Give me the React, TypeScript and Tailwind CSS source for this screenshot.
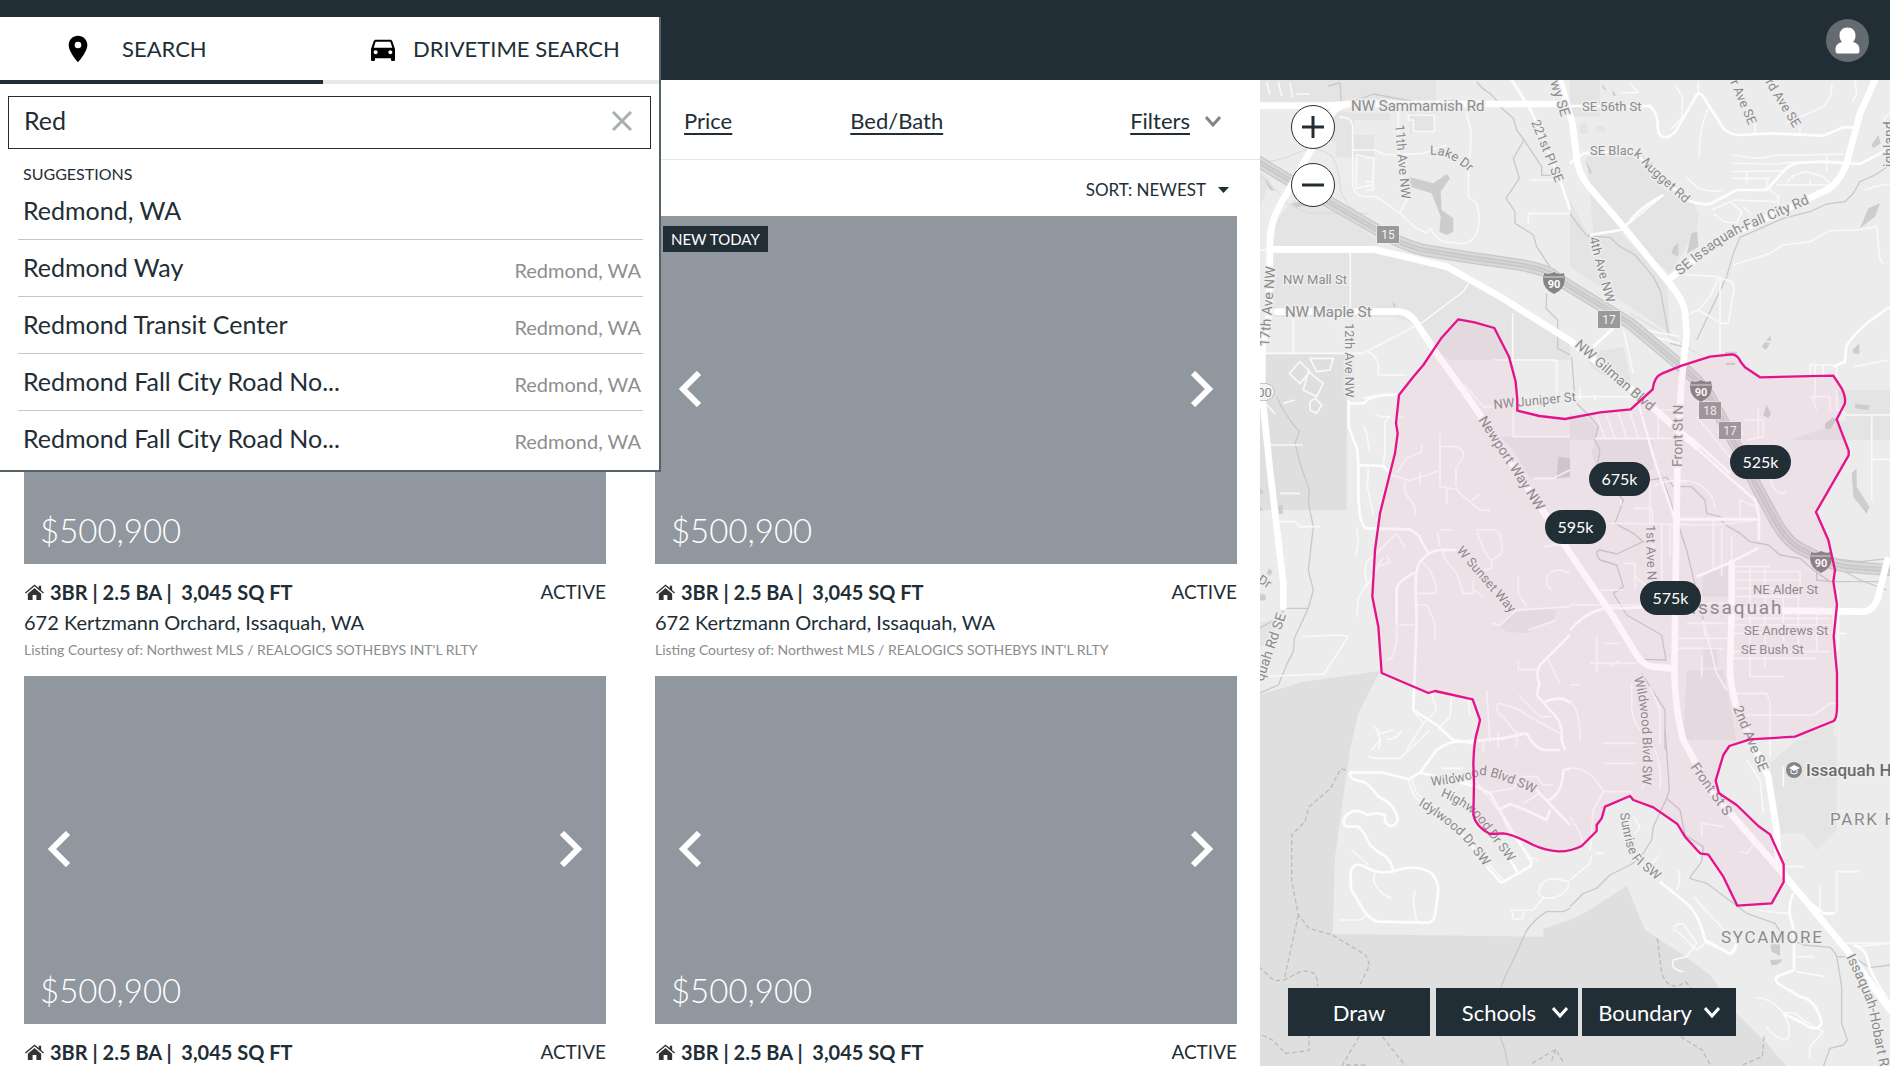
import { MdDirectionsCar, MdPlace } from "react-icons/md";

const suggestions = [
  { name: "Redmond, WA", city: "" },
  { name: "Redmond Way", city: "Redmond, WA" },
  { name: "Redmond Transit Center", city: "Redmond, WA" },
  { name: "Redmond Fall City Road No...", city: "Redmond, WA" },
  { name: "Redmond Fall City Road No...", city: "Redmond, WA" },
];

const listings = [
  { id: 1, isNew: true },
  { id: 2, isNew: true },
  { id: 3, isNew: false },
  { id: 4, isNew: false },
];

const pins = [
  { price: "675k", place: "left-[329px] top-[382px]" },
  { price: "525k", place: "left-[470px] top-[365px]" },
  { price: "595k", place: "left-[285px] top-[430px]" },
  { price: "575k", place: "left-[380px] top-[501px]" },
];

// Map geometry is drawn at three units per pixel, in six tiles
const tiles = [
  {
    at: "translate(-27 -30)",
    areas: [
      "M0 30H558V92L470 98L400 84L290 98H0Z",
      "M60 550H370L600 600L960 810V870H600L560 850L480 755L430 740H60Z",
      "M80 450L130 390L230 410L400 520L360 530H70Z",
      "M258 195H372V262H258ZM243 125H312V215H243Z",
      "M478 128H555V190H480ZM310 130H420V150H310Z",
      "M20 440L60 330L27 300Z",
    ],
    parks: ["M38 850H310L290 990V1320H27V880Z"],
    water: [
      "M475 320L550 340L590 312L600 325L572 365L575 420L610 445V485L590 495L568 485L572 440L545 370L480 350Z",
      "M42 325L75 362L60 360ZM125 402L160 392L210 400L140 412ZM428 690L440 712H430Z",
    ],
    trails: [
      "M235 48L270 38L274 100",
      "M680 36Q700 60 720 70Q750 100 750 110L790 145L800 180L822 210L790 265L808 325L768 385L795 425V460L850 495L860 530L905 598",
      "M822 210L875 290V316H940",
      "M890 670L888 715L923 750V835L960 855",
      "M270 110L370 72L520 100L620 90",
    ],
    minor: [
      "M268 142Q305 138 308 170V340Q312 380 350 380Q380 375 400 395L450 430L500 475L530 488L542 475Q560 520 610 518Q660 530 680 490Q695 450 680 400L655 380V290Q665 230 662 180L650 130",
      "M308 240H375Q400 255 420 255L520 250L590 225",
      "M445 110V250L450 290L470 390L448 430",
      "M130 740V850M301 545V735M27 540H80M27 850H340L520 755M520 755L640 665L655 640",
      "M320 255L372 265L368 345L318 355ZM345 335H370V360H348",
      "M475 135H553V185H490V150H475Z",
      "M355 845Q375 855 385 880V915H470M788 730V870M730 870H920V990M340 985Q380 975 440 972",
      "M50 35L60 75M85 35L95 78M120 38L128 82M140 72H180",
      "M150 875L180 905L150 940L118 910ZM175 905L220 940L200 980L160 960ZM180 865H250L240 900L200 905Z",
      "M838 330H950M835 460V430H960",
    ],
    medium: ["M785 30L845 125L885 220L930 330L960 420"],
  },
  {
    at: "translate(933 -240)",
    areas: [
      "M0 240H90V350H0ZM50 470L220 465L285 570L360 590L385 640L380 690L300 820L160 700L70 700Z",
      "M0 600L50 700L150 700L290 840L300 1000L0 800Z",
      "M50 1060L160 1040L190 1180L60 1100Z",
      "M28 372L50 370L55 400L30 402ZM80 378H105V395H80Z",
    ],
    parks: [],
    water: [
      "M95 250L110 270L100 268ZM128 270L140 288L128 286ZM905 435L925 405L932 430L910 445Z",
      "M870 685L895 625L930 610L915 650ZM350 762L365 700L382 695L385 740ZM310 740L325 730V770L305 760Z",
      "M575 1040L585 1025L600 1030L588 1050ZM592 1015L603 1008V1022H590ZM848 1050L868 1030V1062L850 1060Z",
      "M465 1055H500V1065H465ZM468 1088H495V1095H468Z",
      "M45 478L65 515L60 525Z",
    ],
    trails: [
      "M0 640Q40 700 55 708L120 712L150 740L195 765L250 830L272 875L280 920L297 1010",
      "M960 495L915 525L870 545L850 580L825 605L770 612L720 635L640 655L510 712L490 760L470 830L380 1020",
      "M5 1070L15 1200M300 1030L360 1045",
    ],
    minor: [
      "M180 250L205 278H150M315 255L338 290L335 355L300 390M385 245V278M415 325Q385 390 388 470",
      "M555 370V400M690 380V400M650 370L760 320Q790 290 785 250M855 240L860 280L848 305",
      "M485 465L560 475L630 465H700L820 462M485 490L620 492L680 485M485 515L640 512M485 535H600M485 600L620 605M770 465V515M530 515V555M590 535V570M620 555H775",
      "M650 550Q665 520 710 515L760 530L780 550M720 540V555",
      "M350 532L385 565Q430 580 460 570M425 630L480 605L515 635L500 670L460 665L430 640M520 620L545 645M600 570L625 590V620",
      "M490 795L600 760L640 735L720 725L780 692L860 690L920 680L930 780L940 790",
      "M330 822L440 830L485 845Q495 860 490 880L475 970H455L385 930M450 830V1060",
      "M445 835L420 890L385 930L350 945M160 990L190 1120M200 985L330 1010M210 1000L330 1030",
      "M720 1095H800V1130H720ZM735 1095V1200M760 1095V1130M850 1100L955 1080",
      "M885 570L920 558L960 552M960 340Q930 360 945 380L960 370",
      "M0 1190H190M30 1165V1200M75 1185V1200",
      "M150 690L190 660L280 585",
    ],
    medium: [
      "M0 318H240Q262 340 263 370Q262 410 285 412Q310 410 325 380L380 285Q388 275 400 290L460 385Q480 405 510 405L600 400L760 407L820 382H860",
      "M0 490L40 460L120 455H190L350 600Q390 615 420 612L500 570L590 570L640 515Q660 490 690 488L760 485L870 492L960 445",
      "M60 705L150 690L180 665Q200 630 280 585",
      "M960 920L890 970Q825 1030 828 1050L825 1085L790 1100",
      "M70 1040L130 985",
    ],
  },
  {
    at: "translate(-27 930)",
    areas: ["M750 140H960V265H840L790 180Z", "M27 700L90 680L60 760L27 770ZM750 710L790 670L850 655L920 660L910 690L830 730L770 725Z"],
    parks: ["M27 915L160 875L390 843L325 970L300 1080L255 1400L248 1632L880 1640V1616L960 1590V2100H27Z"],
    water: [
      "M27 290L42 310H27ZM27 345L40 362H27ZM85 345H98V372H86ZM58 535L68 545L60 558L50 550ZM27 612L47 614V630L30 632Z",
      "M925 200L960 205V260L920 265Z",
    ],
    trails: [
      "M80 20Q100 70 148 125L135 160L150 220L178 300L175 340L190 410L175 540L190 600L175 655L133 745L130 785L112 820L85 885L27 910",
      "M27 715L85 685L105 655H175",
    ],
    minor: [
      "M50 45L75 70M100 40L135 30M180 35L195 25L215 45L200 70L180 60Z",
      "M45 165H158M90 310H150M80 395H135L150 410H210M325 225L330 395",
      "M375 70L390 80H420L405 95V185L400 230M340 110L350 130L358 185M355 235L352 290L370 375M440 80H460",
      "M515 165V185L470 205L440 250M425 255L480 272L530 255L565 242M465 275V310L495 350V378M510 245V285M570 130V290L620 298L640 320L690 360L720 362M570 170H620Q645 180 640 200L618 235V290M590 295V345M665 330L690 312",
      "M320 415L325 450L318 498M350 515L345 540L350 580L325 625L320 680M440 430L380 490L350 515M440 430L465 475M385 530L420 515L410 495",
      "M570 420H610M562 425L570 470M680 420H740Q760 440 755 490L725 510V535L690 545M680 425L700 475L720 510",
      "M515 515Q560 555 558 610H500M445 705H495M500 645H530L555 700V750M440 590V760L425 805L405 810M350 590L400 500",
      "M155 740L270 735L295 740L220 855M27 860L220 852",
      "M580 475V500L620 550L640 610H670V570M670 600L700 620M805 560V610L830 650M890 575Q890 540 930 540L960 550M905 600Q890 590 890 575",
      "M725 700L750 705L800 660L960 650M835 720L920 690",
      "M640 -20L700 50H740M790 60V140H960M850 265H910L960 240M880 470L960 460",
      "M395 1045L365 1080M370 1005Q400 1040 385 1080M490 910V960L520 1000L470 1080M545 912L560 960L520 1000M605 915L600 980L570 1010M655 930L660 975",
      "M805 815V838H860M895 810L930 880M710 900L720 1060M745 940Q730 960 760 980L800 1030L820 1030M745 940Q800 950 830 975L930 1030M805 915L870 980H905",
    ],
    medium: [
      "M296 30V110L322 180L325 225L400 228L425 255M325 225V330Q330 410 350 415L480 418L505 435L535 490",
      "M620 480H570Q540 480 510 515Q495 540 497 600L500 700L490 960L560 1005L610 1050",
      "M495 548Q440 575 440 600V700",
      "M300 40H340Q370 10 440 15",
      "M960 735L870 825Q855 850 868 880L860 915Q890 950 910 970Q940 1000 935 1050L945 1080M885 935Q940 915 960 940",
    ],
  },
  {
    at: "translate(933 930)",
    areas: [
      "M75 150H250V240L80 235L65 190ZM0 70L50 80L85 120L75 150H0ZM400 550L480 520V620H395ZM350 840H460L500 1050H340Z",
      "M400 770H440L445 830H400ZM660 150H960V0H800L830 90Z",
      "M680 1040L790 1000V1060Z",
    ],
    parks: [],
    water: [
      "M845 250L860 235V290L898 350L890 372L850 320ZM855 42L898 46L895 60L855 55ZM765 100L790 82L800 90L780 118L765 115ZM580 75L590 45L603 70L595 85Z",
    ],
    trails: [
      "M20 40L60 80L85 110L75 150L90 180L80 240L160 330L135 400L190 430L220 455L140 492L90 480Q70 485 90 510L140 525L160 590L130 610L170 675L275 735L288 810L220 808",
      "M200 30L250 200L290 300L350 480L400 690",
      "M240 270L290 262L310 290L365 290L405 330L410 370L450 380L460 400L510 430L540 455L595 465L630 495L690 505L730 540L780 575H930",
      "M740 540V570L780 575",
      "M780 505L870 515L960 505M780 520L870 570L950 600",
      "M215 850L285 960V1080",
    ],
    minor: [
      "M80 80L105 145M110 75L135 145M145 70L170 145M180 65L205 145M75 145H320M265 65V145M320 60H220",
      "M150 330L155 345M190 355H245L250 400M240 275V400M120 400L440 405L560 390M330 385H560M565 340V450M560 475L480 520M400 690L405 740",
      "M250 290Q300 260 350 280M320 270Q420 270 435 350M510 380V330L560 350M720 20H780V60M740 60L725 20M600 250Q605 310 640 310L650 300",
      "M275 400V580M300 405V500M160 520H195V600M250 405V540M190 555L245 600M430 390V540M455 415V560M485 440V560",
      "M490 530H600M485 545H690V595M490 570H690M490 595H690M490 620H690M490 685H780M490 705H780M490 730H780M490 785H780M490 805H740M540 530V860M585 530V830M640 620V780M685 600V780M740 660V780M790 660V780",
      "M320 745H480M320 775H460M350 700H470M0 645H320M320 640H490M90 600H160M60 820H200M80 740V850M100 760H150M120 830L150 810M0 885H30",
      "M400 690L440 850L470 900M395 800V860M480 910H590L600 940V1050M520 975H730M730 975L780 940H800M540 860H640",
      "M380 80L520 250M480 130H520M565 50V140M520 90H580V140L530 150",
      "M905 80V208H960M820 75H960M905 205V330M805 600V780M805 730H830",
      "M185 880V960Q190 1000 220 1030M240 890L270 960V1060M0 930Q30 960 30 1050",
      "M800 0V60L830 70",
    ],
    medium: [
      "M205 40L250 200L320 405M380 175L480 265L555 330L567 380V450M360 140L480 250M0 720Q70 640 160 655L240 650",
      "M320 388H565M380 560L480 518L565 475M240 650H320",
    ],
  },
  {
    at: "translate(-27 1950)",
    areas: [],
    parks: [],
    water: [],
    trails: ["M960 535L940 545H890Q850 570 828 605L790 690L765 740L750 780V920L765 960L775 1010"],
    minor: [
      "M390 10L430 0M355 80L380 85H450L540 0M385 20V0M455 0Q440 30 410 28",
      "M560 160L680 155Q705 190 745 240M575 115H640M745 235L780 310L800 330M700 65V30M745 55V10M800 50V10",
      "M305 362L335 385L355 405M375 425Q365 455 380 470Q400 500 425 503M495 480L490 515L500 575M268 570H330L350 555",
      "M865 490Q870 450 910 445L955 455Q960 490 910 503Q880 510 865 490ZM880 503L850 540L820 540M785 540L820 540V565L790 568Z",
      "M475 150L490 195L560 260L640 320L750 458M485 148L500 190L570 240L760 450",
      "M700 190L790 175L810 140H860L880 165H910M820 220L870 190",
      "M840 380L865 390",
    ],
    medium: [
      "M300 128H400L475 148L510 128L560 60Q600 30 640 35L760 25L830 10Q850 50 880 60H930",
      "M300 128Q295 150 340 155Q360 165 385 200Q440 225 443 270Q435 290 420 288Q400 280 405 255Q380 245 350 255Q320 230 290 255Q270 280 290 290H325Q345 310 360 345Q380 365 400 375Q420 385 430 422",
      "M303 420Q315 395 345 410Q385 435 430 424Q500 400 545 430Q570 460 564 490L555 555Q550 580 530 578L385 575Q360 570 340 540L305 480Q300 460 303 420Z",
      "M510 128L680 170L720 190L790 310L845 395Q845 410 830 415L755 458L710 410M775 380L805 430",
      "M745 240L780 222Q830 240 890 270L900 240M850 170L960 285M890 215Q940 190 940 120L960 115",
      "M575 0L610 30L680 42",
    ],
  },
  {
    at: "translate(933 1950)",
    areas: ["M680 30L800 20V300L740 360L700 310H620L600 100Z"],
    parks: ["M-60 620L0 570L50 545L170 468L225 600L330 668L420 735L500 850L590 940L650 1010H-60Z"],
    water: ["M600 640H630V678L605 665ZM600 690L635 688V695L620 705H604ZM950 830L960 825V835Z"],
    trails: [
      "M0 530L40 490L80 475L120 435L180 405L210 385L245 330L250 290L290 205L298 180L290 60L285 0",
      "M290 205L330 240L345 315L400 350L395 395L365 435L360 445L410 460L530 550L615 580L640 620L700 645L780 652Q800 670 802 690L815 770V880L832 930L820 945L780 955L760 1010",
      "M800 680L850 682L900 713L960 705",
    ],
    minor: [
      "M0 115Q60 110 100 185H190M100 185L70 240L60 365M75 370H100M65 375L60 400L0 450M105 100H200M95 40H200",
      "M240 30Q280 100 270 180M215 180L230 150M395 320V280L460 290M510 365L530 370L550 345M530 90L570 150L580 250",
      "M190 260L210 290L195 310M245 400L270 375M320 480Q335 450 325 420M385 385V350",
      "M630 410H700M800 550V425H865M670 490Q655 520 660 560L672 600V720M560 540L640 550H660M672 680H730M680 725L765 740",
      "M370 500L500 640L480 670L410 640M410 635L380 660Q320 600 312 600Q310 580 340 582L380 640L350 680L310 690Q300 720 340 725",
      "M560 805Q600 800 640 850Q670 900 650 930Q620 930 590 890M640 850Q670 840 700 870L760 905L720 950L718 985",
      "M820 640H960M750 465V540M960 640L860 650M0 260Q30 300 40 340",
      "M600 0V80M640 110V170",
    ],
    medium: [
      "M270 455L350 520Q385 550 405 630L480 672Q495 670 500 640",
      "M672 720L620 740Q610 755 640 770L690 800Q740 810 755 880Q740 910 700 880L640 850",
      "M850 645Q890 655 895 700Q900 730 960 820M710 510L760 550H795",
      "M670 490Q655 520 660 560L672 600V720",
    ],
  },
];

const highway =
  "M-30 228L98 305L203 362L363 455Q430 495 493 510L613 530L753 550Q830 560 873 580L933 620L1113 730L1268 860Q1340 920 1363 970L1433 1100L1493 1220L1553 1330Q1590 1390 1623 1405L1693 1440Q1740 1460 1783 1462L1893 1470";

const arterials = [
  "M-27 77H200L270 72H900",
  "M265 72Q235 78 215 105L150 220L83 340Q33 420 33 480L31 700L10 800V950L33 1170L73 1510V1580",
  "M43 508H343L563 560L723 650L933 782L1133 940L1313 1100",
  "M53 695H423Q455 700 473 730L533 820L633 960L673 1020L863 1310L933 1420L1063 1610L1130 1720Q1150 1755 1180 1760L1243 1765",
  "M903 0L920 60L940 130L955 250Q965 290 990 320L1093 440L1223 600Q1275 660 1278 700L1283 760L1268 900L1256 1100L1251 1430L1246 1780Q1250 1900 1273 1980L1353 2130L1563 2370L1763 2610L1893 2790",
  "M1848 0L1803 100L1763 250Q1740 310 1703 330L1533 410L1400 470L1233 595",
  "M1418 1450V1590L1413 1780Q1420 1850 1440 1900L1528 2090L1553 2250L1558 2350",
  "M1413 1590L1813 1595Q1850 1590 1860 1540L1885 1440",
];

const boundary =
  "M598 718L647 727L706 744L750 830L770 905L775 960V992L841 1008L918 1017L1023 997L1115 988L1181 928Q1185 890 1210 880L1268 857L1353 830L1418 823Q1435 823 1445 845L1458 862L1503 892L1723 887L1748 925Q1762 955 1757 972L1733 1018L1769 1112V1126L1671 1296L1708 1380L1728 1470L1723 1505L1734 1573L1724 1670L1734 1780V1880Q1734 1915 1724 1923L1608 1970L1473 1978L1411 1998L1393 2025L1370 2102L1380 2140L1433 2175L1498 2238L1533 2263L1574 2353V2406L1538 2470L1435 2477L1393 2390L1348 2324L1323 2320L1278 2270L1255 2232L1183 2182L1123 2160L1113 2148L1038 2180L1028 2215L1013 2235V2253L968 2298Q935 2315 898 2314Q860 2312 823 2295Q760 2262 733 2260L693 2262Q650 2240 643 2205L645 2110L643 2050Q645 1980 656 1950L663 1920L641 1858L528 1833L508 1839L368 1779L358 1640L340 1550L348 1410L363 1300L408 1120L416 1060L411 1030L420 945L463 890L493 855L548 773Z";

// Street names that run along a road
const roadLabels = [
  { name: "17th Ave NW", path: "M10 267L17 180", size: 14 },
  { name: "12th Ave NW", path: "M86 243L86 340", size: 13 },
  { name: "11th Ave NW", path: "M136 45L144 135", size: 13 },
  { name: "Lake Dr", path: "M171 75Q190 73 212 94", size: 13 },
  { name: "221st Pl SE", path: "M272 42L300 112", size: 13 },
  { name: "wy SE", path: "M291 2L306 50", size: 14 },
  { name: "SE Black Nugget Rd", path: "M331 75L373 75Q380 78 386 88L440 136", size: 13 },
  { name: "SE Issaquah-Fall City Rd", path: "M421 196Q465 158 488 150L570 115", size: 14 },
  { name: "4th Ave NW", path: "M330 158L352 240", size: 13 },
  { name: "NW Gilman Blvd", path: "M315 266L412 350", size: 14 },
  { name: "r Ave SE", path: "M471 2L496 60", size: 13 },
  { name: "rd Ave SE", path: "M506 2L545 65", size: 13 },
  { name: "Newport Way NW", path: "M219 340L292 452", size: 14 },
  { name: "NW Juniper St", path: "M235 329L330 320", size: 13 },
  { name: "W Sunset Way", path: "M197 471L262 546", size: 13 },
  { name: "Front St N", path: "M423 387L424 310", size: 14 },
  { name: "1st Ave N", path: "M387 445L389 520", size: 13 },
  { name: "Wildwood Blvd SW", path: "M375 598Q388 645 382 720", size: 13 },
  { name: "2nd Ave SE", path: "M474 628L506 705", size: 14 },
  { name: "Wildwood Blvd SW", path: "M172 706Q205 703 222 695Q240 696 290 721", size: 13 },
  { name: "Highwood Dr SW", path: "M181 716Q210 728 220 742L260 796", size: 13 },
  { name: "Idylwood Dr SW", path: "M159 725Q195 748 207 763L240 806", size: 13 },
  { name: "Sunrise Pl SW", path: "M361 733Q366 770 375 782L412 812", size: 13 },
  { name: "Front St S", path: "M431 687L478 753", size: 14 },
  { name: "Issaquah-Hobart Rd", path: "M587 877Q604 910 610 930L625 1010", size: 14 },
  { name: "quah Rd SE", path: "M4 602L31 524", size: 14 },
  { name: "Dr", path: "M-2 502L18 514", size: 13 },
  { name: "ighland", path: "M635 87L635 20", size: 14 },
];

function Shield({ x, y }: { x: number; y: number }) {
  return (
    <g transform={`translate(${x} ${y})`}>
      <path
        d="M-10 -9Q-5 -7 0 -10Q5 -7 10 -9L11 -3Q11 7 0 12Q-11 7 -11 -3Z"
        fill="#858585"
        stroke="#ededed"
      />
      <path d="M-10 -5H10" stroke="#dcdcdc" />
      <text y="6" textAnchor="middle" fontSize="11" fontWeight="700" fill="#fff" stroke="none">
        90
      </text>
    </g>
  );
}

function Exit({ x, y, label }: { x: number; y: number; label: string }) {
  return (
    <g transform={`translate(${x} ${y})`}>
      <rect x="-11" y="-8" width="22" height="17" fill="#9a9a9a" stroke="#f4f4f4" />
      <text y="5" textAnchor="middle" fontSize="12" fill="#f3f3f3" stroke="none">
        {label}
      </text>
    </g>
  );
}

function MapCanvas() {
  return (
    <svg
      className="absolute inset-0 h-full w-full"
      viewBox="1 0 630 986"
      preserveAspectRatio="xMinYMin slice"
      role="img"
      aria-label="Map of Issaquah"
    >
      <rect width="631" height="986" fill="#ececec" />
      <svg width="631" height="986" viewBox="0 0 1893 2958" fill="none" strokeLinejoin="round">
        {tiles.map((tile) => (
          <g key={tile.at} transform={tile.at}>
            {tile.areas.map((d) => <path key={d} d={d} fill="#e4e4e4" />)}
          </g>
        ))}
        {tiles.map((tile) => (
          <g key={tile.at} transform={tile.at}>
            {tile.parks.map((d) => <path key={d} d={d} fill="#dfdfdf" />)}
            {tile.water.map((d) => <path key={d} d={d} fill="#cdcdcd" />)}
            {tile.trails.map((d) => <path key={d} d={d} stroke="#c9c9c9" strokeWidth="4" />)}
          </g>
        ))}
        <g stroke="#bcbcbc" strokeWidth="4" strokeDasharray="14 8">
          <path d="M260 2070L245 2066L215 2125L150 2180L138 2225L98 2265V2400L118 2505L150 2545L220 2565L320 2625L332 2655L300 2720M118 2505L75 2700L125 2675Q180 2665 175 2720M0 2660L45 2702L75 2700" />
          <path d="M10 2865L40 2880L80 2920L150 2912V2860M300 2870L250 2955H320M370 2870L440 2958M820 2950L890 2908L915 2950M890 2908L875 2950" />
          <path d="M1195 2575L1208 2680Q1230 2740 1280 2705L1300 2730M1265 2870L1330 2910L1355 2958M1515 2870L1510 2930L1450 2955" />
        </g>
        <g stroke="#dadada" strokeWidth="3">
          <path d="M-30 245Q60 250 110 220Q180 190 220 230Q240 260 245 330Q260 400 420 470" />
          <path d="M-30 270Q40 300 80 370L150 400L330 400M1113 700L1250 780L1330 830" />
        </g>
        {tiles.map((tile) => (
          <g key={tile.at} transform={tile.at} stroke="#f9f9f9">
            {tile.minor.map((d) => <path key={d} d={d} strokeWidth="5" />)}
          </g>
        ))}
        {tiles.map((tile) => (
          <g key={tile.at} transform={tile.at} stroke="#fdfdfd">
            {tile.medium.map((d) => <path key={d} d={d} strokeWidth="8" />)}
          </g>
        ))}
        <path d={highway} stroke="#c4c4c4" strokeWidth="36" />
        <path d={highway} stroke="#d8d8d8" strokeWidth="30" />
        <path d={highway} stroke="#c6c6c6" strokeWidth="14" />
        <path d={highway} stroke="#d2d2d2" strokeWidth="6" />
        {arterials.map((d) => <path key={d} d={d} stroke="#fff" strokeWidth="20" strokeLinecap="round" />)}
      </svg>

      <g
        className="font-[Roboto,sans-serif]"
        fill="#8b8b8b"
        stroke="#eeeeee"
        strokeWidth="3"
        strokeLinejoin="round"
        paintOrder="stroke"
        fontSize="13"
      >
        <text x="92" y="31" fontSize="15">NW Sammamish Rd</text>
        <text x="24" y="204">NW Mall St</text>
        <text x="26" y="237" fontSize="15">NW Maple St</text>
        <text x="323" y="31">SE 56th St</text>
        <text x="494" y="514">NE Alder St</text>
        <text x="485" y="555">SE Andrews St</text>
        <text x="482" y="574">SE Bush St</text>
        <text x="432" y="534" fontSize="19" className="tracking-widest">Issaquah</text>
        <text x="547" y="696" fontSize="17" fontWeight="500" fill="#6b6b6b">Issaquah High</text>
        <text x="571" y="745" fontSize="17" className="tracking-widest">PARK HILL</text>
        <text x="462" y="863" fontSize="17" className="tracking-widest">SYCAMORE</text>
        {roadLabels.map((road, i) => (
          <g key={road.path}>
            <path id={`road-${i}`} d={road.path} fill="none" stroke="none" />
            <text fontSize={road.size}>
              <textPath href={`#road-${i}`}>{road.name}</textPath>
            </text>
          </g>
        ))}
        <g strokeWidth="1">
          <Exit x={129} y={154} label="15" />
          <Exit x={350} y={239} label="17" />
          <Exit x={451} y={330} label="18" />
          <Exit x={471} y={350} label="17" />
          <Shield x={295} y={202} />
          <Shield x={442} y={310} />
          <Shield x={562} y={481} />
          <rect x="-14" y="304" width="29" height="16" rx="8" fill="#f3f3f3" stroke="#8b8b8b" />
          <text x="-9" y="317" fontSize="13" stroke="none">900</text>
          <circle cx="535" cy="690" r="8" fill="#858585" />
          <path d="M530 688L535 685L541 688L535 691Z" fill="#fff" stroke="none" />
          <path d="M532 690V693Q535 695 538 693V690" fill="none" stroke="#fff" />
        </g>
      </g>

      <svg width="631" height="986" viewBox="0 0 1893 2958">
        <path
          d={boundary}
          fill="#f25aa8"
          fillOpacity="0.07"
          stroke="#e5128a"
          strokeWidth="7"
          strokeLinejoin="round"
        />
      </svg>
    </svg>
  );
}

function ChevronDown({ className }: { className: string }) {
  return (
    <svg className={className} viewBox="0 0 16 16" fill="none" stroke="currentColor" strokeWidth="3" aria-hidden="true">
      <path d="M1 4L8 12L15 4" />
    </svg>
  );
}

function HouseIcon() {
  return (
    <svg className="h-[17px] w-[19px]" viewBox="0 0 20 17" fill="#333" aria-hidden="true">
      <path d="M10 0L0 8.500L1 9.600L10 2L19 9.600L20 8.500L17 6V1.500H14.500V3.800Z" />
      <path d="M10 3.800L3 9.800V16.500H8V11H12V16.500H17V9.800Z" />
    </svg>
  );
}

function ListingCard({ isNew }: { isNew: boolean }) {
  return (
    <article>
      <div className="relative flex h-[348px] flex-col justify-between bg-[#90979e] text-white">
        <div className="h-[50px] pl-2 pt-[10px]">
          {isNew && (
            <span className="inline-block bg-[#222e36] px-2 text-[15px] leading-[26px]">NEW TODAY</span>
          )}
        </div>
        <div className="flex justify-between px-[23px]">
          <button type="button" aria-label="Previous photo">
            <svg className="h-9 w-6" viewBox="0 0 24 36" fill="none" stroke="currentColor" strokeWidth="6">
              <path d="M21 2L5 18L21 34" />
            </svg>
          </button>
          <button type="button" aria-label="Next photo">
            <svg className="h-9 w-6" viewBox="0 0 24 36" fill="none" stroke="currentColor" strokeWidth="6">
              <path d="M3 2L19 18L3 34" />
            </svg>
          </button>
        </div>
        <p className="px-4 pb-4 text-[33px] font-light leading-9">$500,900</p>
      </div>
      <div className="pt-3">
        <div className="flex h-8 items-center justify-between">
          <h2 className="flex items-center gap-[6px] whitespace-pre pl-px text-[20px] font-bold">
            <HouseIcon />
            {"3BR | 2.5 BA |  3,045 SQ FT"}
          </h2>
          <span className="text-[19px]">ACTIVE</span>
        </div>
        <p className="text-[20px] leading-7">672 Kertzmann Orchard, Issaquah, WA</p>
        <p className="text-[14px] leading-7 text-[#8c8c8c]">
          Listing Courtesy of: Northwest MLS / REALOGICS SOTHEBYS INT'L RLTY
        </p>
      </div>
    </article>
  );
}

function SearchPanel() {
  return (
    <section className="absolute left-0 top-[17px] z-10 w-[661px] border-b-2 border-r-2 border-[#55626a] bg-white pb-[3px]">
      <div role="tablist" className="flex h-[67px] text-[22px]">
        <button
          type="button"
          role="tab"
          aria-selected="true"
          className="flex w-[323px] items-center border-b-4 border-[#222e36] pl-[62px]"
        >
          <MdPlace className="h-8 w-8 text-black" />
          <span className="pl-7">SEARCH</span>
        </button>
        <button
          type="button"
          role="tab"
          aria-selected="false"
          className="flex flex-1 items-center border-b-4 border-[#e6e8e9] pl-[44px]"
        >
          <MdDirectionsCar className="h-8 w-8 text-black" />
          <span className="pl-[14px]">DRIVETIME SEARCH</span>
        </button>
      </div>
      <div className="mx-2 mt-3 flex h-[53px] items-center border border-[#222e36] pb-1 pl-[15px] pr-[18px]">
        <input
          type="text"
          aria-label="Search location"
          defaultValue="Red"
          className="min-w-0 flex-1 text-[25px] outline-none"
        />
        <button type="button" aria-label="Clear search" className="text-[#a9aeb1]">
          <svg className="h-5 w-5" viewBox="0 0 20 20" fill="none" stroke="currentColor" strokeWidth="3">
            <path d="M1 1L19 19M19 1L1 19" />
          </svg>
        </button>
      </div>
      <h2 className="mt-4 pl-[23px] text-[16px] leading-[18px]">SUGGESTIONS</h2>
      <ul className="pl-[18px] pr-4">
        {suggestions.map((item, i) => (
          <li key={i} className="border-b border-[#c4c6c7] last:border-b-0">
            <a href="#" className="flex h-14 items-center justify-between pl-[5px] pr-[2px] text-[25px]">
              {item.name}
              <span className="pt-1 text-[20px] text-[#8e8e8e]">{item.city}</span>
            </a>
          </li>
        ))}
      </ul>
    </section>
  );
}

export default function App() {
  return (
    <div className="relative flex h-screen flex-col overflow-hidden bg-white font-[Lato,sans-serif] text-[#222e36]">
      <header className="flex h-20 shrink-0 items-center justify-end bg-[#222e36] pr-[21px]">
        <button type="button" aria-label="Account">
          <svg className="h-[43px] w-[43px]" viewBox="0 0 43 43" aria-hidden="true">
            <circle cx="21.500" cy="21.500" r="21.500" fill="#646c72" />
            <path
              d="M21.500 8.500C26.500 8.500 29.500 12 29.500 16.500C29.500 19.500 28.500 21.500 27 23C31.500 24 33.500 27 33.500 30.500C33.500 33 33 34.500 31.500 34.500H11.500C10 34.500 9.500 33 9.500 30.500C9.500 27 11.500 24 16 23C14.500 21.500 13.500 19.500 13.500 16.500C13.500 12 16.500 8.500 21.500 8.500Z"
              fill="#fff"
            />
          </svg>
        </button>
      </header>
      <SearchPanel />

      <div className="flex min-h-0 flex-1">
        <main className="w-2/3 overflow-hidden">
          <nav className="flex h-20 items-center justify-end border-b border-[#e6e6e6] pr-[39px] pt-[2px] text-[22px]">
            <a href="#" className="mr-[118px] underline underline-offset-4">Price</a>
            <a href="#" className="mr-[187px] underline underline-offset-4">Bed/Bath</a>
            <a href="#" className="flex items-center gap-[15px]">
              <span className="underline underline-offset-4">Filters</span>
              <ChevronDown className="h-4 w-4 text-[#858585]" />
            </a>
          </nav>
          <div className="flex h-14 items-center justify-end pr-[31px]">
            <button type="button" className="flex items-center gap-3 pt-1 text-[17px]">
              SORT: NEWEST
              <svg className="h-[6px] w-[11px]" viewBox="0 0 11 6" fill="currentColor" aria-hidden="true">
                <path d="M0 0H11L5.500 6Z" />
              </svg>
            </button>
          </div>
          <div className="grid grid-cols-2 gap-x-[49px] gap-y-3 pl-6 pr-[23px]">
            {listings.map((listing) => (
              <ListingCard key={listing.id} isNew={listing.isNew} />
            ))}
          </div>
        </main>

        <aside className="relative w-1/3 overflow-hidden">
          <MapCanvas />
          {pins.map((pin) => (
            <button
              key={pin.price}
              type="button"
              className={`absolute ${pin.place} h-[34px] w-[61px] rounded-full bg-[#222e36] text-[16px] text-white`}
            >
              {pin.price}
            </button>
          ))}
          <div className="absolute left-[31px] top-[25px] flex flex-col gap-[14px]">
            {["in", "out"].map((zoom) => (
              <button
                key={zoom}
                type="button"
                aria-label={`Zoom ${zoom}`}
                className="flex h-11 w-11 items-center justify-center rounded-full border border-[#222e36] bg-white"
              >
                <svg className="h-6 w-6" viewBox="0 0 24 24" stroke="currentColor" strokeWidth="3">
                  <path d={zoom === "in" ? "M1 12H23M12 1V23" : "M1 12H23"} />
                </svg>
              </button>
            ))}
          </div>
          <div className="absolute bottom-[30px] left-7 flex gap-1 text-[22px] text-white">
            <button type="button" className="mr-[2px] h-12 w-[142px] bg-[#222e36]">Draw</button>
            <button type="button" className="flex h-12 w-[142px] items-center justify-center gap-4 bg-[#222e36] pl-4">
              Schools
              <ChevronDown className="h-4 w-4" />
            </button>
            <button type="button" className="flex h-12 w-[154px] items-center justify-center gap-3 bg-[#222e36]">
              Boundary
              <ChevronDown className="h-4 w-4" />
            </button>
          </div>
        </aside>
      </div>
    </div>
  );
}
